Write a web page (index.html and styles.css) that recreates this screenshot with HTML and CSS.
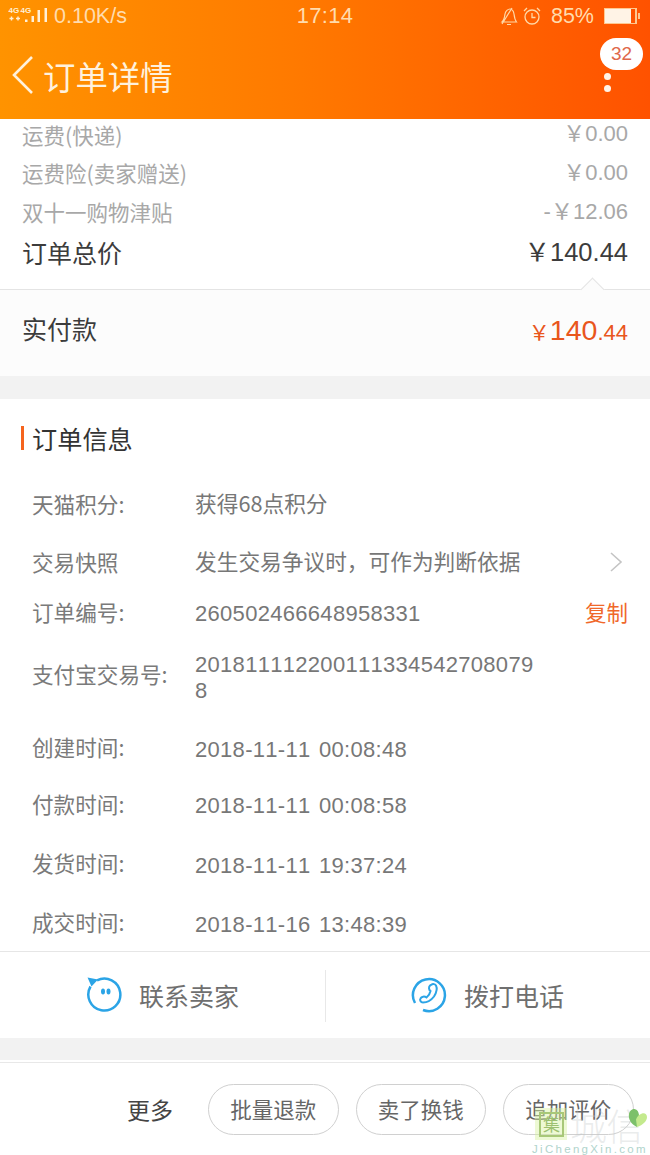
FILE: index.html
```html
<!DOCTYPE html>
<html lang="zh-CN">
<head>
<meta charset="utf-8">
<title>订单详情</title>
<link rel="stylesheet" href="styles.css">
</head>
<body>
<div class="screen">
  <header class="header">
    <div class="status">
      <div class="status-left">
        <svg class="signal" width="46" height="18" viewBox="0 0 46 18">
          <text x="0.500" y="5.500" class="net">4G</text><text x="12.500" y="5.500" class="net">4G</text>
          <path d="M1.500 11.500h4M3.500 9.500v4M8 11.500h4M10 9.500v4" stroke="#fff0d8" stroke-width="1.400" fill="none"/>
          <rect x="17" y="12.500" width="2.500" height="2.500" fill="#fff0d8"/><rect x="23.500" y="9" width="2.500" height="6" fill="#fff0d8"/><rect x="29.500" y="3" width="2.500" height="12" fill="#fff0d8"/><rect x="36.500" y="1" width="2.500" height="14" fill="#fff0d8"/>
        </svg>
        <span>0.10K/s</span>
      </div>
      <div class="status-time">17:14</div>
      <div class="status-right">
        <svg width="20" height="20" viewBox="0 0 20 20" fill="none" stroke="#ffd9a8" stroke-width="1.200"><path d="M3 16c2-2 2.500-4 3-8 .5-3 3-5 5-5 2 0 3.500 2 4 5 .5 4 1 6 2.500 8zM8 18.500h4M3 18 13 2"/></svg>
        <svg width="20" height="20" viewBox="0 0 20 20" fill="none" stroke="#ffd9a8" stroke-width="1.300"><circle cx="10" cy="11" r="7"/><path d="M10 7v4.500h3.500M2 5l3-3M18 5l-3-3"/></svg>
        <span class="pct">85%</span>
        <span class="battery"><span class="battery-fill"></span></span>
        <i class="battery-nub"></i>
      </div>
    </div>
    <div class="nav">
      <svg class="back" width="24" height="40" viewBox="0 0 24 40" fill="none" stroke="#fff1dc" stroke-width="2.600"><path d="M21 2 3 20l18 18"/></svg>
      <h1 class="nav-title">订单详情</h1>
      <div class="more">
        <span class="badge">32</span>
        <i class="dot dot-a"></i><i class="dot"></i>
      </div>
    </div>
  </header>

  <section class="prices">
    <div class="price-row row-1"><span>运费(快递)</span><span class="num">￥0.00</span></div>
    <div class="price-row"><span>运费险(卖家赠送)</span><span class="num">￥0.00</span></div>
    <div class="price-row"><span>双十一购物津贴</span><span class="num">-￥12.06</span></div>
    <div class="total-row"><span>订单总价</span><span class="num">￥140.44</span></div>
  </section>

  <section class="paid">
    <i class="caret"></i>
    <span class="paid-label">实付款</span>
    <span class="paid-value"><span class="yen">￥</span>140<span class="cents">.44</span></span>
  </section>

  <div class="gap gap-a"></div>

  <section class="info">
    <h2 class="info-title">订单信息</h2>
    <div class="info-row h-a"><span class="k">天猫积分:</span><span class="v zh">获得68点积分</span></div>
    <div class="info-row h-b"><span class="k">交易快照</span><span class="v zh">发生交易争议时，可作为判断依据</span>
      <svg class="chev" width="14" height="22" viewBox="0 0 14 22" fill="none" stroke="#c4c4c4" stroke-width="1.600"><path d="M2 2l10 9-10 9"/></svg></div>
    <div class="info-row h-c"><span class="k">订单编号:</span><span class="v">260502466648958331</span><span class="copy">复制</span></div>
    <div class="info-row h-d"><span class="k">支付宝交易号:</span><span class="v wrap">2018111122001113345427080798</span></div>
    <div class="info-row h-e"><span class="k">创建时间:</span><span class="v">2018-11-11 00:08:48</span></div>
    <div class="info-row h-f"><span class="k">付款时间:</span><span class="v">2018-11-11 00:08:58</span></div>
    <div class="info-row h-g"><span class="k">发货时间:</span><span class="v">2018-11-11 19:37:24</span></div>
    <div class="info-row h-h"><span class="k">成交时间:</span><span class="v">2018-11-16 13:48:39</span></div>
  </section>

  <section class="contact">
    <div class="contact-item">
      <svg width="36" height="36" viewBox="0 0 36 36" fill="none" stroke="#2ba4e6" stroke-width="2.500"><path d="M11 3.300A16 16 0 1 1 4.500 9.500"/><path d="M1.500 .5l10.500 2-6.500 7z" fill="#2ba4e6" stroke="none"/><ellipse cx="17" cy="14.500" rx="2" ry="3" fill="#2ba4e6" stroke="none"/><ellipse cx="22.500" cy="14.500" rx="2" ry="3" fill="#2ba4e6" stroke="none"/></svg>
      <span>联系卖家</span>
    </div>
    <div class="contact-item">
      <svg width="36" height="36" viewBox="0 0 36 36" fill="none" stroke="#2ba4e6" stroke-width="2.500"><path d="M12 33A16 16 0 1 0 4 26"/><path d="M20 8c2-1.500 4-1 5 .5 1.500 3 .5 7-2 11-3 4-7 6-11 6-2.500 0-3.500-2.500-2.500-4 1-2 4-2.500 6-1 2-1.500 3.500-4 4-6.500-1.800-1-2-4-.5-5.500z" stroke-width="2"/></svg>
      <span>拨打电话</span>
    </div>
  </section>

  <div class="gap gap-b"></div>

  <footer class="actions">
    <span class="more-label">更多</span>
    <span class="pill">批量退款</span>
    <span class="pill">卖了换钱</span>
    <span class="pill">追加评价</span>
  </footer>

  <div class="watermark">
    <div class="wm-top"><span class="wm-box"><span class="wm-inner">集</span></span><span class="wm-name">城信</span></div>
    <svg class="wm-leaf" width="20" height="20" viewBox="0 0 20 20"><path d="M9 19C3 16 0 11 1 6c.5-3 3-5.500 5.500-5 3 .5 4 3 4.500 6z" fill="#7cc06a"/><path d="M9 19c6-2 10-6 10-10 0-3-2.500-4.500-5-3.500-3 1-5 3-6 6z" fill="#c4ea8e"/></svg>
    <div class="wm-url">JiChengXin.com</div>
  </div>
</div>
</body>
</html>
```
FILE: styles.css
```css
* { box-sizing: border-box; margin: 0; padding: 0; }
html, body { width: 650px; height: 1155px; overflow: hidden; background: #fff; }
body { font-family: "Noto Sans CJK SC", "Liberation Sans", sans-serif; color: #666; }
.screen { position: relative; width: 650px; height: 1155px; overflow: hidden; }
i { display: block; font-style: normal; }

.header { height: 119px; background: linear-gradient(90deg, #ff9300 0%, #ff7a00 45%, #ff5200 100%); }
.status { height: 32px; display: grid; grid-template-columns: 1fr auto 1fr; align-items: center; padding: 0 10px 0 8px; color: #ffdcae; font: 21.500px "Liberation Sans", sans-serif; }
.status-left { display: flex; align-items: center; }
.net { font: bold 8px "Liberation Sans", sans-serif; fill: #fff0d8; }
.status-time { color: #ffdcae; font-size: 22px; letter-spacing: .3px; margin-left: 2px; }
.status-right { display: flex; align-items: center; justify-content: flex-end; gap: 3px; }
.pct { margin-left: 6px; margin-right: 7px; }
.battery { display: block; width: 33px; height: 16px; border: 1px solid #ffc890; border-right-width: 2px; }
.battery-fill { display: block; width: 85%; height: 100%; background: #fff3e6; }
.battery-nub { width: 2px; height: 6px; margin-left: -2px; background: #ffc890; }

.nav { position: relative; height: 87px; display: flex; align-items: center; padding: 0 0 0 11px; }
.back { margin-top: -1px; margin-right: 8px; }
.nav-title { font-size: 32.400px; line-height: 40px; font-weight: 400; color: #fff1dc; }
.more { position: absolute; right: 7px; top: 6px; width: 43px; display: flex; flex-direction: column; align-items: flex-start; }
.badge { width: 43px; height: 32px; border-radius: 16px; background: #fff; color: #e0684a; font: 19px/32px "Liberation Sans", sans-serif; text-align: center; }
.dot { width: 7px; height: 7px; margin-left: 3.500px; margin-top: 5px; border-radius: 50%; background: #fff4e8; }
.dot-a { margin-top: 2.500px; }

.prices { height: 171px; border-bottom: 1px solid #e4e4e4; padding: 0 22px; font-size: 21.500px; color: #a8a8a8; }
.price-row { display: flex; justify-content: space-between; align-items: center; height: 39px; }
.row-1 { height: 34px; padding-bottom: 4px; }
.num { font: 22px "Liberation Sans", "Noto Sans CJK SC", sans-serif; padding-bottom: 6px; }
.total-row { display: flex; justify-content: space-between; align-items: center; height: 42px; font-size: 25px; color: #3c3c3c; }
.total-row .num { font-size: 25.500px; padding-bottom: 5px; }

.paid { position: relative; height: 86px; background: #fcfcfc; display: flex; justify-content: space-between; align-items: center; padding: 0 22px 10px; }
.caret { position: absolute; left: 583.500px; top: -9.500px; width: 17px; height: 17px; background: #fcfcfc; border-left: 1px solid #e4e4e4; border-top: 1px solid #e4e4e4; transform: rotate(45deg); }
.paid-label { font-size: 25px; color: #3c3c3c; }
.paid-value { color: #e9561c; font: 28.500px "Liberation Sans", "Noto Sans CJK SC", sans-serif; margin-top: 4px; }
.yen { font-size: 21px; }
.cents { font-size: 22px; }

.gap { background: #f2f2f2; }
.gap-a { height: 23px; }
.gap-b { height: 22px; }

.info { height: 553px; border-bottom: 1px solid #e6e6e6; }
.info-title { position: relative; height: 81px; padding: 20px 0 0 32px; font-size: 25.200px; line-height: 38px; font-weight: 400; color: #333; }
.info-title::before { content: ""; position: absolute; left: 21px; top: 27px; width: 3px; height: 24px; background: #f5641e; }
.info-row { position: relative; display: flex; align-items: center; padding-left: 32px; font-size: 21.600px; color: #7a7a7a; }
.k { width: 163px; flex: none; }
.v { font: 22px/26px "Liberation Sans", "Noto Sans CJK SC", sans-serif; font-kerning: none; letter-spacing: .3px; word-spacing: 2px; color: #777; padding-top: 6px; }
.zh { font: 21.700px/26px "Noto Sans CJK SC", "Liberation Sans", sans-serif; letter-spacing: 0; word-spacing: 0; padding-top: 0; }
.wrap { width: 344px; word-break: break-all; padding-top: 10px; }
.h-a { height: 46px; }
.h-b { height: 70px; }
.h-c { height: 30px; }
.h-d { height: 94px; }
.h-e { height: 53px; }
.h-f { height: 60px; }
.h-g { height: 59px; }
.h-h { height: 59px; }
.chev { position: absolute; left: 609px; top: 25px; }
.copy { position: absolute; right: 22px; font-size: 21.500px; color: #f0682a; }

.contact { height: 86px; display: flex; position: relative; }
.contact-item { flex: 1; display: flex; align-items: center; justify-content: center; gap: 17px; font-size: 25px; color: #6f6f6f; }
.contact::after { content: ""; position: absolute; left: 325px; top: 18px; width: 1px; height: 52px; background: #e8e8e8; }

.actions { height: 93px; margin-top: 2px; border-top: 1px solid #e8e8e8; display: flex; align-items: flex-start; padding: 21px 0 0 127px; }
.more-label { flex: none; white-space: nowrap; font-size: 23px; line-height: 50px; color: #444; margin-right: 35px; }
.pill { width: 130.500px; height: 51px; border: 1px solid #d0d0d0; border-radius: 26px; margin-right: 17px; text-align: center; font-size: 21.500px; line-height: 48px; color: #666; flex: none; }

.watermark { position: absolute; left: 532px; top: 1108px; width: 118px; }
.wm-top { display: flex; align-items: flex-start; height: 34px; }
.wm-box { display: block; width: 32px; height: 32px; margin-left: 3px; padding: 4px; background: rgba(215,242,160,.45); }
.wm-inner { display: block; width: 25px; height: 25px; border: 2px solid #a8c878; color: #9cc070; font-size: 17px; line-height: 20px; text-align: center; }
.wm-name { font-size: 37px; line-height: 34px; font-weight: 300; color: rgba(195,200,200,.35); margin-left: 3px; white-space: nowrap; letter-spacing: -.5px; }
.wm-leaf { position: absolute; left: 96px; top: 0; }
.wm-url { font: 11.500px/11px "Liberation Sans", sans-serif; letter-spacing: 2.300px; color: #b0d4cc; margin-top: 2px; white-space: nowrap; }
```
